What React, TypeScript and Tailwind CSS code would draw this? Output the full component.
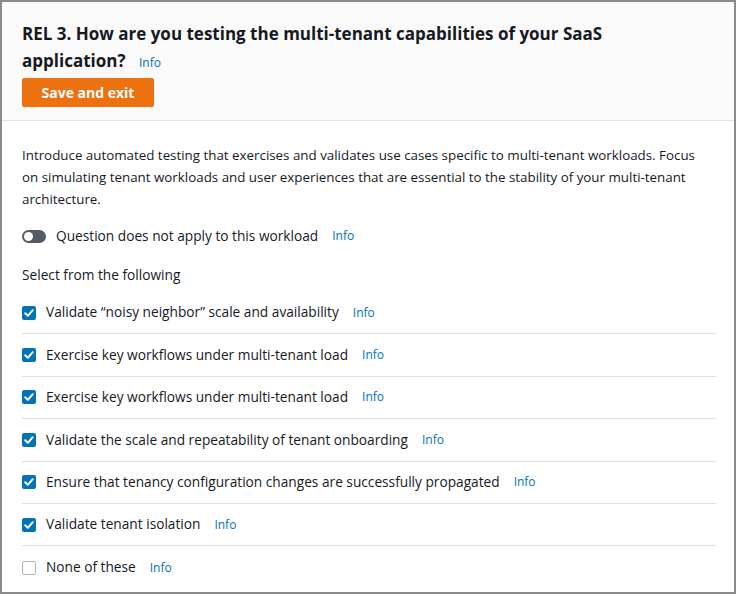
import React from "react";

const items: { label: string; checked: boolean }[] = [
  { label: "Validate “noisy neighbor” scale and availability", checked: true },
  { label: "Exercise key workflows under multi-tenant load", checked: true },
  { label: "Exercise key workflows under multi-tenant load", checked: true },
  { label: "Validate the scale and repeatability of tenant onboarding", checked: true },
  { label: "Ensure that tenancy configuration changes are successfully propagated", checked: true },
  { label: "Validate tenant isolation", checked: true },
  { label: "None of these", checked: false },
];

function Info({ className = "" }: { className?: string }) {
  return <span className={`text-[12px] font-medium text-[#0073bb] ${className}`}>Info</span>;
}

function Check({ checked }: { checked: boolean }) {
  if (checked) {
    return (
      <span className="flex h-[14px] w-[14px] shrink-0 items-center justify-center rounded-[2px] bg-[#0073bb]">
        <svg viewBox="0 0 14 14" className="h-[14px] w-[14px]">
          <path d="M3.2 7.2 L5.8 9.8 L10.8 4.2" fill="none" stroke="white" strokeWidth="2" strokeLinecap="round" strokeLinejoin="round" />
        </svg>
      </span>
    );
  }
  return <span className="h-[14px] w-[14px] shrink-0 rounded-[2px] border border-[#aab7b8] bg-white" />;
}

export default function App() {
  return (
    <div
      className="h-[594px] w-[736px] overflow-hidden border-2 border-[#8a8a8a] bg-white text-[#16191f]"
      style={{ fontFamily: '"Open Sans", "Noto Sans", sans-serif' }}
    >
      <div className="border-b border-[#e4e4e4] bg-[#fafafa] px-[20px] pb-[13px] pt-[18px]">
        <h1 className="text-[17px] font-bold leading-[27px]">
          REL 3. How are you testing the multi-tenant capabilities of your SaaS
          <br />
          application? <Info className="ml-[9px]" />
        </h1>
        <button className="mt-[2px] h-[29px] w-[132px] rounded-[2px] bg-[#ec7211] text-[14px] font-bold text-white">
          Save and exit
        </button>
      </div>
      <div className="px-[20px] pt-[23px]">
        <p className="mr-[-20px] whitespace-nowrap text-[13.35px] leading-[22px]">
          Introduce automated testing that exercises and validates use cases specific to multi-tenant workloads. Focus
          <br />
          on simulating tenant workloads and user experiences that are essential to the stability of your multi-tenant
          <br />
          architecture.
        </p>
        <div className="mt-[15px] flex h-[22px] items-center">
          <span className="relative h-[13px] w-[24px] rounded-full bg-[#545b64]">
            <span className="absolute left-[2px] top-[2px] h-[9px] w-[9px] rounded-full bg-white" />
          </span>
          <span className="ml-[10px] text-[13.7px]">Question does not apply to this workload</span>
          <Info className="ml-[14px]" />
        </div>
        <div className="mt-[17px] text-[13.7px] leading-[22px]">Select from the following</div>
        <div className="mr-[-2px] mt-[6px]">
          {items.map((it, i) => (
            <div
              key={i}
              className={`flex h-[42.4px] items-center ${i < items.length - 1 ? "border-b border-[#e0e0e0]" : ""}`}
            >
              <Check checked={it.checked} />
              <span className="ml-[10px] text-[13.7px]">{it.label}</span>
              <Info className="ml-[14px]" />
            </div>
          ))}
        </div>
      </div>
    </div>
  );
}
